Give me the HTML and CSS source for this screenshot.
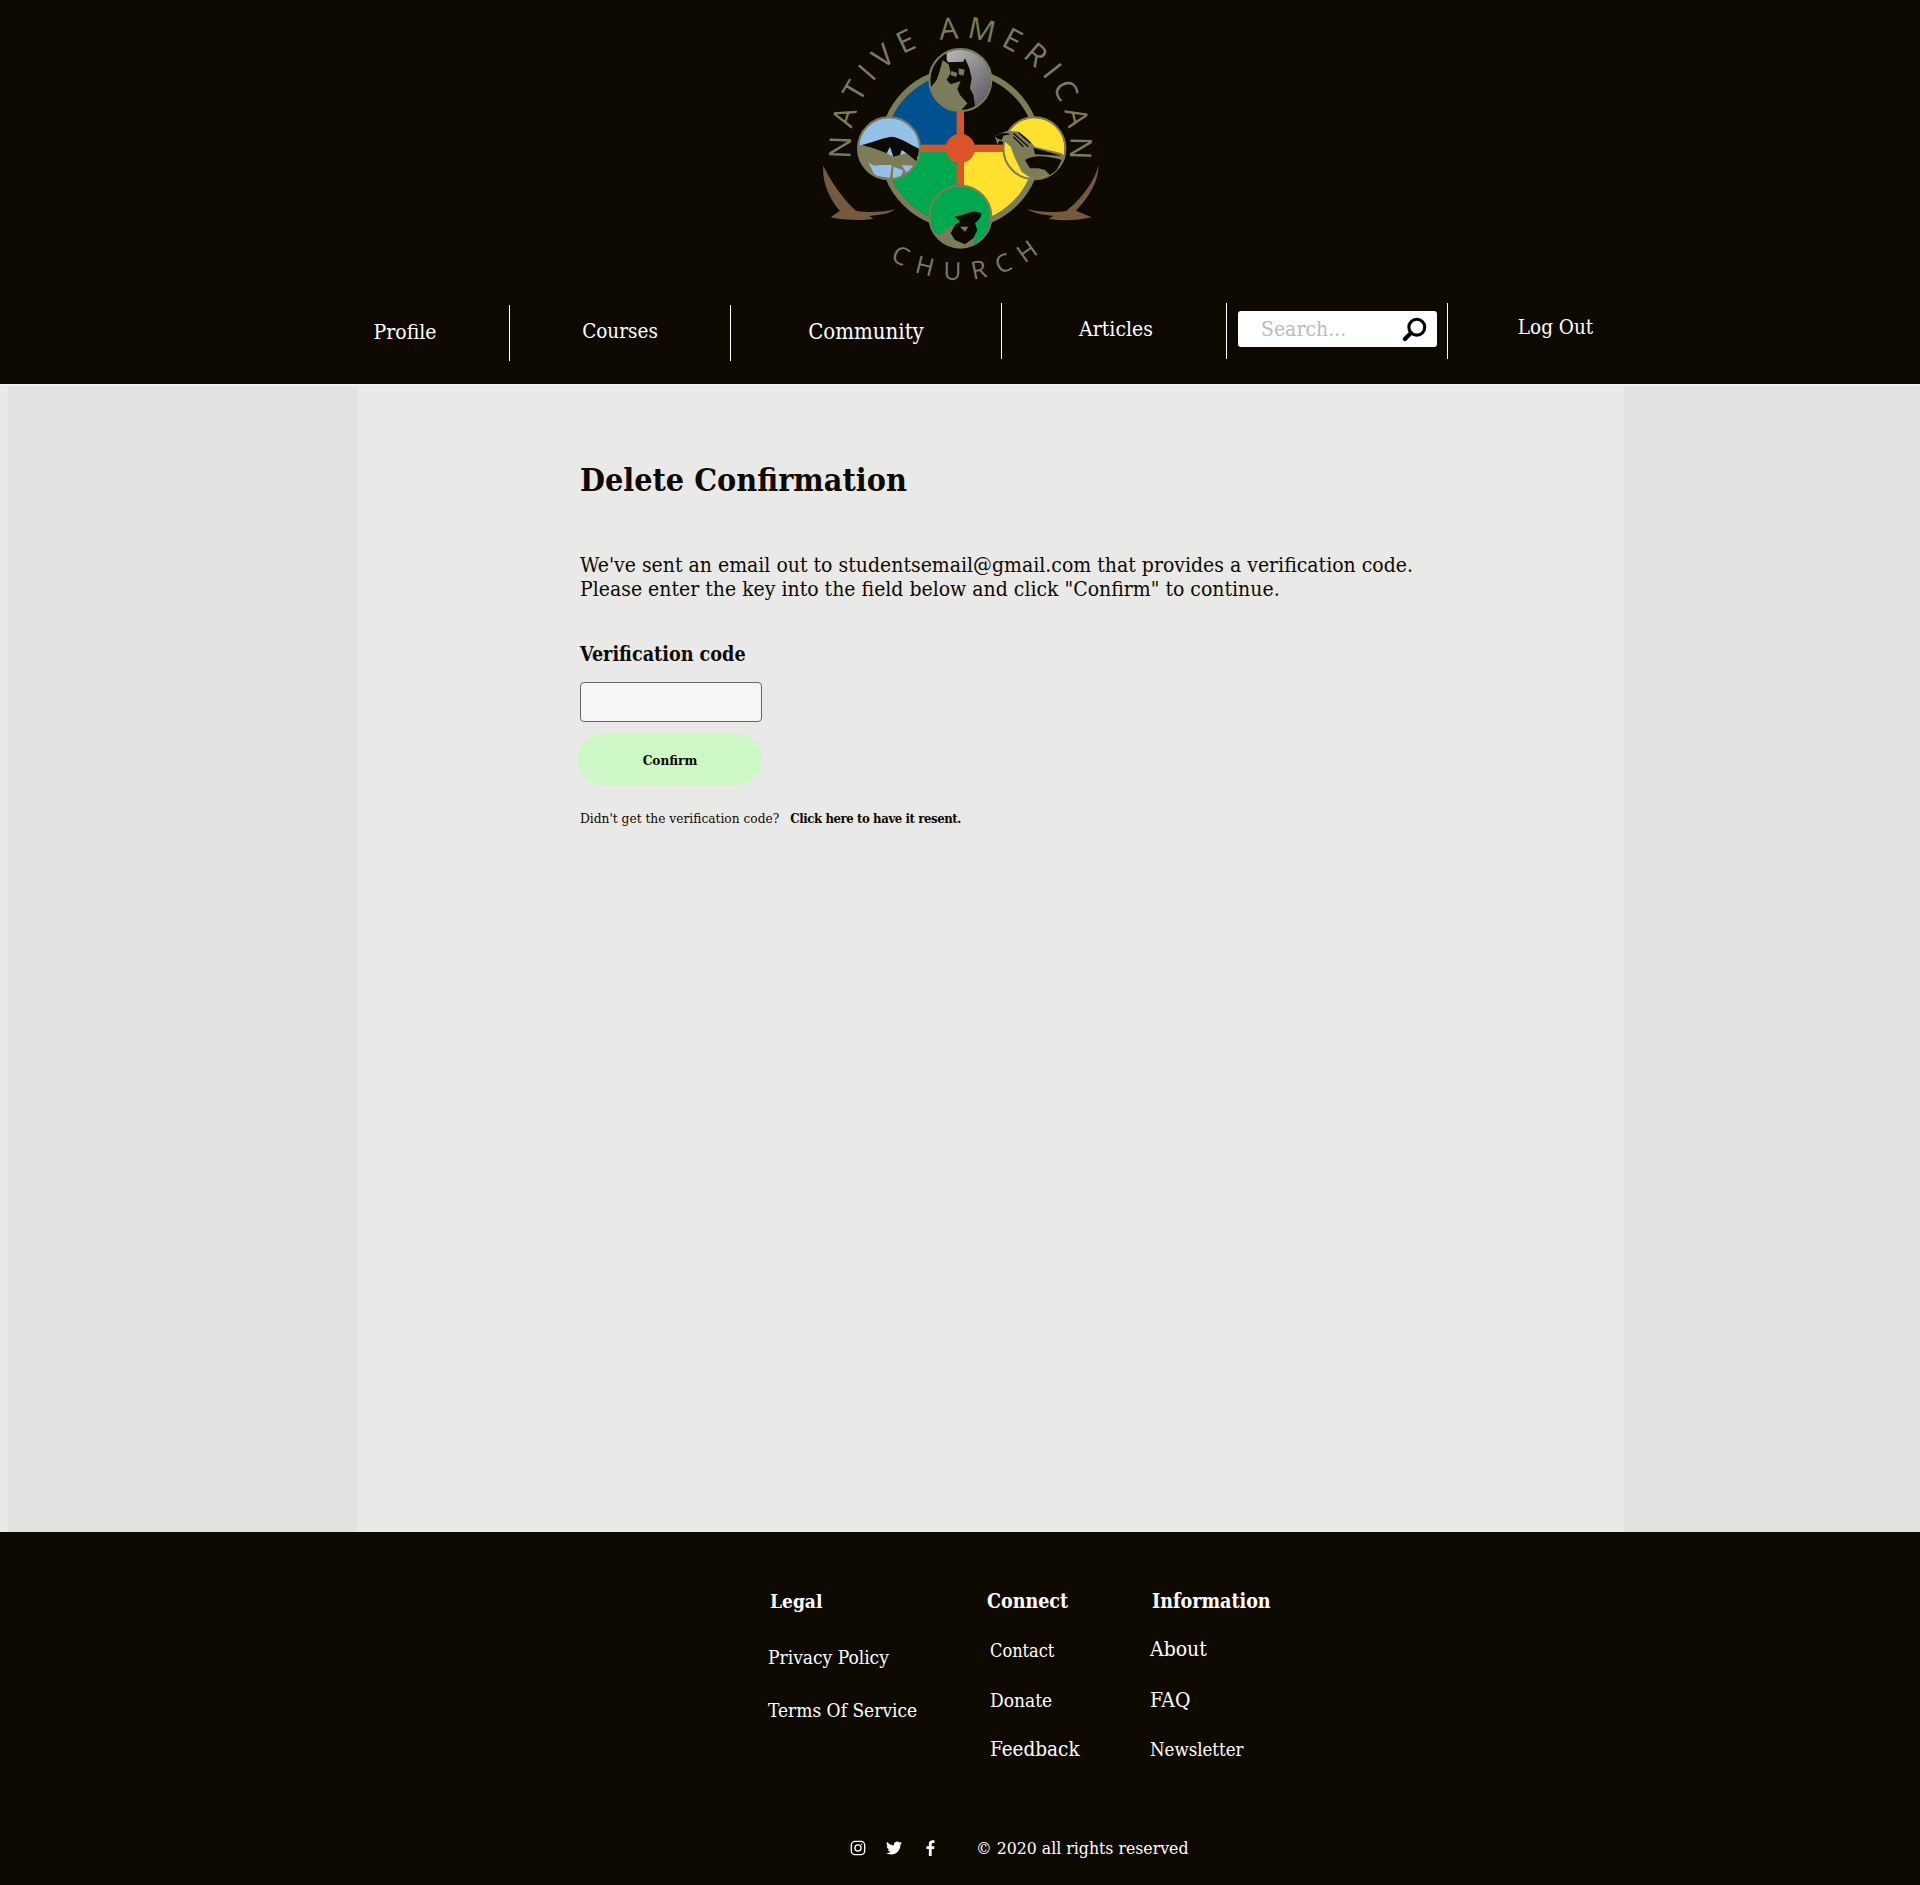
FILE: index.html
```html
<!DOCTYPE html>
<html lang="en">

<head>
    <meta charset="UTF-8">
    <meta name="viewport" content="width=device-width, initial-scale=1.0">
    <title>Delete Confirmation</title>
    <link rel="stylesheet" href="styles.css">
</head>

<body>
    <header class="top">
        <div class="logo-row">
            <svg class="logo" viewBox="0 0 1080 900" role="img" aria-label="Native American Church">
                <defs>
                    <path id="arcTop" d="M232 557.5 A329 329 0 1 1 850 557.5" />
                    <path id="arcBottom" d="M147 445 A394 394 0 0 0 935 445" />
                    <clipPath id="clipTop"><circle cx="541" cy="240" r="91" /></clipPath>
                    <clipPath id="clipLeft"><circle cx="327" cy="445" r="91" /></clipPath>
                    <clipPath id="clipBottom"><circle cx="541" cy="650" r="91" /></clipPath>
                    <linearGradient id="moon" x1="0" y1="0" x2="1" y2="1">
                        <stop offset="0" stop-color="#c9c9c9" />
                        <stop offset="1" stop-color="#55525a" />
                    </linearGradient>
                </defs>

                <text class="logo-text" font-size="90" letter-spacing="23"><textPath href="#arcTop" startOffset="50.9%" text-anchor="middle">NATIVE AMERICAN</textPath></text>
                <text class="logo-text" font-size="74" letter-spacing="35"><textPath href="#arcBottom" startOffset="52.7%" text-anchor="middle">CHURCH</textPath></text>

                <!-- feathers -->
                <path class="feather" d="M130 497 C150 540 190 600 228 632 C270 640 310 636 345 628 C330 642 300 645 268 648 L280 656 C240 664 190 660 152 652 L180 632 C150 600 125 545 130 497 Z" />
                <path class="feather" d="M955 495 C958 545 920 600 888 632 L935 652 C890 662 850 664 806 656 L820 648 C790 645 760 640 742 628 C780 636 820 640 860 632 C900 600 945 545 955 495 Z" />

                <!-- quarters and ring -->
                <path fill="#00518f" d="M541 445 V220 A225 225 0 0 0 316 445 Z" />
                <path fill="#ffe12e" d="M541 445 H766 A225 225 0 0 1 541 670 Z" />
                <path fill="#00a84f" d="M541 445 V670 A225 225 0 0 1 316 445 Z" />
                <circle cx="541" cy="445" r="233" fill="none" stroke="#7c7d58" stroke-width="18" />
                <rect x="530" y="300" width="22" height="290" fill="#d95427" />
                <rect x="400" y="434" width="290" height="22" fill="#d95427" />
                <circle cx="541" cy="445" r="44" fill="#d95427" />

                <!-- top: wolf -->
                <circle cx="541" cy="240" r="91" fill="url(#moon)" />
                <g clip-path="url(#clipTop)">
                    <g transform="translate(420 135)">
                        <path fill="#0e0a01" d="M80 0 V45 L85 52 L130 50 L135 40 L148 70 L155 100 L150 130 L160 150 L168 200 H0 V0 Z" />
                        <path fill="#7c7d58" d="M68 45 L86 58 L92 84 L80 104 L92 118 L122 108 L112 132 L120 150 L142 175 L120 200 L26 178 L30 130 L50 105 L60 75 Z" />
                        <path fill="#7c7d58" d="M94 78 L112 84 L108 96 L92 90 Z M116 70 L134 74 L130 92 L116 88 Z" />
                    </g>
                </g>
                <circle cx="541" cy="240" r="93" fill="none" stroke="#7c7d58" stroke-width="6" />

                <!-- left: buffalo -->
                <circle cx="327" cy="445" r="91" fill="#93c1e8" />
                <g clip-path="url(#clipLeft)">
                    <g transform="translate(210 345)">
                        <path fill="#7c7d58" d="M15 92 L35 90 L70 100 L110 115 L130 125 L170 115 L225 130 V210 H15 Z" />
                        <path fill="#93c1e8" d="M55 142 L72 152 L95 150 L125 150 L120 188 L75 182 Z M130 155 L160 166 L150 192 L128 192 Z M155 150 L190 152 L170 174 Z" />
                        <path fill="#0e0a01" d="M35 90 C60 85 90 70 125 65 C150 68 175 85 205 100 L212 115 L204 122 L200 128 L212 140 L205 150 L195 135 L170 115 L155 105 L150 120 L130 125 L120 95 L110 115 L70 100 Z" />
                    </g>
                </g>
                <circle cx="327" cy="445" r="93" fill="none" stroke="#7c7d58" stroke-width="6" />

                <!-- right: eagle -->
                <circle cx="763" cy="445" r="91" fill="#ffe12e" />
                <circle cx="763" cy="445" r="93" fill="none" stroke="#7c7d58" stroke-width="6" />
                <g transform="translate(630 345)">
                    <path fill="#7c7d58" d="M15 65 C30 50 60 45 85 50 L110 68 L135 95 L215 115 L225 130 L208 158 L180 178 L130 195 L95 170 L75 130 L62 95 L45 80 L28 78 L22 88 Z" />
                    <path fill="#0e0a01" d="M15 65 C25 55 45 50 62 58 L50 60 L40 62 L35 75 L25 72 Z M130 98 L215 122 L135 118 Z M105 135 C125 122 160 118 215 135 L200 165 L180 180 L165 165 L145 160 L120 160 Z" />
                    <path fill="none" stroke="#0e0a01" stroke-width="4" d="M70 55 L115 95 M85 52 L122 85 M70 65 L100 95" />
                </g>

                <!-- bottom: bear -->
                <circle cx="541" cy="650" r="91" fill="#00a84f" />
                <g clip-path="url(#clipBottom)">
                    <g transform="translate(420 555)">
                        <path fill="#7c7d58" d="M30 140 L60 150 L92 122 L110 125 L165 160 L160 180 L130 200 L60 195 Z" />
                        <path fill="#0e0a01" d="M105 95 L125 90 L160 78 L185 85 L180 100 L165 115 L172 135 L160 160 L135 178 L105 165 L92 145 L105 120 L120 110 Z" />
                        <path fill="#7c7d58" d="M120 125 L145 125 L135 140 Z" />
                    </g>
                </g>
                <circle cx="541" cy="650" r="93" fill="none" stroke="#7c7d58" stroke-width="6" />
            </svg>
        </div>

        <nav class="nav">
            <a class="nav-item nav-profile">Profile</a>
            <a class="nav-item nav-courses">Courses</a>
            <a class="nav-item nav-community">Community</a>
            <a class="nav-item nav-articles">Articles</a>
            <div class="nav-item nav-search">
                <div class="search-box">
                    <span class="search-text">Search...</span>
                    <svg class="search-icon" viewBox="0 0 24 24">
                        <circle cx="14.2" cy="9.8" r="7.6" fill="none" stroke="#000" stroke-width="3" />
                        <path d="M8.6 15.4 L2.8 21.2" stroke="#000" stroke-width="4" stroke-linecap="round" />
                    </svg>
                </div>
            </div>
            <a class="nav-item nav-logout">Log Out</a>
        </nav>
    </header>

    <main class="page">
        <div class="side side-left"></div>
        <section class="content">
            <h1>Delete Confirmation</h1>
            <p class="intro">We've sent an email out to studentsemail@gmail.com that provides a verification code.<br>Please enter the key into the field below and click "Confirm" to continue.</p>
            <label class="code-label" for="code">Verification code</label>
            <input class="code-input" id="code">
            <button class="confirm-btn">Confirm</button>
            <p class="resend">Didn't get the verification code?<a class="resend-link">Click here to have it resent.</a></p>
        </section>
        <div class="side side-right"></div>
    </main>

    <footer class="foot">
        <div class="foot-cols">
            <div class="col col-legal">
                <h4>Legal</h4>
                <a class="link privacy">Privacy Policy</a>
                <a class="link terms">Terms Of Service</a>
            </div>
            <div class="col col-connect">
                <h4>Connect</h4>
                <a class="link contact">Contact</a>
                <a class="link donate">Donate</a>
                <a class="link feedback">Feedback</a>
            </div>
            <div class="col col-info">
                <h4>Information</h4>
                <a class="link about">About</a>
                <a class="link faq">FAQ</a>
                <a class="link newsletter">Newsletter</a>
            </div>
        </div>
        <div class="foot-bottom">
            <svg class="social" viewBox="0 0 24 24" fill="none" stroke="#fff" stroke-width="2">
                <rect x="2" y="2" width="20" height="20" rx="5.5" />
                <circle cx="12" cy="12" r="4.6" />
                <circle cx="17.6" cy="6.4" r="1" fill="#fff" stroke="none" />
            </svg>
            <svg class="social" viewBox="0 0 24 24" fill="#fff">
                <path d="M23.95 4.57a10 10 0 0 1-2.82.78 4.96 4.96 0 0 0 2.16-2.73c-.95.56-2 .96-3.13 1.19a4.92 4.92 0 0 0-8.38 4.48C7.69 8.1 4.07 6.13 1.64 3.16a4.82 4.82 0 0 0-.67 2.48c0 1.71.87 3.21 2.19 4.1a4.9 4.9 0 0 1-2.23-.62v.06a4.92 4.92 0 0 0 3.95 4.83 5 5 0 0 1-2.21.08 4.94 4.94 0 0 0 4.6 3.42A9.87 9.87 0 0 1 0 19.54a14 14 0 0 0 7.56 2.21c9.05 0 14-7.5 14-13.99 0-.21 0-.42-.02-.63A9.94 9.94 0 0 0 24 4.59z" />
            </svg>
            <svg class="social social-fb" viewBox="0 0 24 24" fill="#fff">
                <path d="M14.5 24V13.5h3.6l.6-4.2h-4.2V6.6c0-1.2.4-2.1 2.1-2.1h2.2V.7C18.4.6 17.1.5 15.7.5c-3.2 0-5.4 1.9-5.4 5.5v3.3H6.7v4.2h3.6V24z" />
            </svg>
            <span class="copy">© 2020 all rights reserved</span>
        </div>
    </footer>
</body>

</html>
```
FILE: styles.css
```css
* {
    box-sizing: border-box;
}

body {
    margin: 0;
    font-family: "DejaVu Serif Condensed", "DejaVu Serif", serif;
    background: #e9e9e7;
    color: #0e0a01;
}

.top {
    height: 385px;
    background: #0e0a01;
    border-bottom: 1px solid #f4f4f2;
}

.logo-row {
    height: 300px;
    display: flex;
    justify-content: center;
}

.logo {
    width: 360px;
    height: 300px;
}

.logo-text {
    font-family: "Open Sans", sans-serif;
    fill: #7c7d58;
}

.feather {
    fill: #755a3e;
}

/* nav */
.nav {
    display: grid;
    grid-template-columns: 209px 221px 271px 225px 221px 215px;
    padding-left: 301px;
    color: #fff;
    font-size: 21px;
}

.nav-item {
    display: flex;
    align-items: center;
    justify-content: center;
    border-right: 1px solid #fff;
    height: 56px;
}

.nav-profile {
    margin-top: 5px;
    padding-bottom: 2px;
}

.nav-courses {
    margin-top: 5px;
    padding-bottom: 5px;
    font-size: 20.5px;
}

.nav-community {
    margin-top: 3px;
    font-size: 22px;
}

.nav-articles {
    margin-top: 3px;
    padding: 0 0 4px 4px;
}

.nav-search {
    margin-top: 3px;
    justify-content: flex-start;
    padding-left: 11px;
}

.nav-logout {
    border-right: 0;
    margin-top: 0;
    height: 54px;
    font-size: 20.5px;
}

.search-box {
    width: 199px;
    height: 36px;
    margin-bottom: 4px;
    background: #fff;
    border-radius: 3px;
    display: flex;
    align-items: center;
    justify-content: space-between;
    padding: 0 10px 0 23px;
}

.search-text {
    color: #bbb;
}

.search-icon {
    width: 25px;
    height: 25px;
}

/* main */
.page {
    height: 1147px;
    padding: 2px 0 0 8px;
    display: flex;
}

.side {
    background: #e1e1df;
}

.side-left {
    width: 349px;
}

.side-right {
    flex: 1;
}

.content {
    width: 1267px;
    background: #e9e9e7;
    padding: 71px 0 0 223px;
}

h1 {
    margin: 0;
    font-size: 32px;
    line-height: 44px;
    font-weight: 700;
}

.intro {
    margin: 51px 0 0;
    font-size: 21px;
    line-height: 24px;
}

.code-label {
    display: block;
    margin-top: 41px;
    font-size: 19.6px;
    line-height: 26px;
    font-weight: 700;
}

.code-input {
    display: block;
    width: 182px;
    height: 40px;
    margin-top: 14px;
    background: #f6f6f4;
    border: 1px solid #666;
    border-radius: 4px;
}

.confirm-btn {
    display: block;
    width: 184px;
    height: 51px;
    margin: 12px 0 0 -2px;
    background: #cdf8c6;
    border: 0;
    border-radius: 26px;
    font-family: inherit;
    font-size: 13.5px;
    font-weight: 700;
    color: #0e0a01;
}

.resend {
    margin: 24px 0 0;
    font-size: 13.6px;
    line-height: 18px;
}

.resend-link {
    margin-left: 11px;
    font-size: 13px;
    letter-spacing: -0.4px;
    font-weight: 700;
}

/* footer */
.foot {
    height: 353px;
    background: #0e0a01;
    color: #fff;
    padding-top: 56px;
}

.foot-cols {
    display: flex;
    padding-left: 768px;
    height: 222px;
}

.col {
    display: flex;
    flex-direction: column;
    align-items: flex-start;
}

.col-legal {
    width: 219px;
}

.col-connect {
    width: 163px;
}

.col h4 {
    margin: 1px 0 -1px;
    font-size: 19.5px;
    line-height: 26px;
    font-weight: 700;
}

.col-legal h4 {
    margin: 0 0 0 2px;
    font-size: 19px;
}

.col-info h4 {
    margin-left: 2px;
}

.link {
    font-size: 19px;
    line-height: 24px;
}

.col-connect .link {
    margin-left: 3px;
}

.privacy {
    margin-top: 31px;
}

.terms {
    margin-top: 29px;
}

.contact {
    margin-top: 25px;
    font-size: 18px;
}

.donate {
    margin-top: 25px;
}

.feedback {
    margin-top: 25px;
    font-size: 20.5px;
}

.about {
    margin-top: 23px;
    font-size: 21px;
}

.faq {
    margin-top: 27px;
    font-size: 21px;
}

.newsletter {
    margin-top: 26px;
    font-size: 18.5px;
}

.foot-bottom {
    display: flex;
    align-items: center;
    padding-left: 850px;
    height: 28px;
    margin-top: 24px;
}

.social {
    width: 16px;
    height: 16px;
    margin-right: 20px;
}

.social-fb {
    margin-right: 38px;
}

.copy {
    font-size: 17.5px;
}
```
